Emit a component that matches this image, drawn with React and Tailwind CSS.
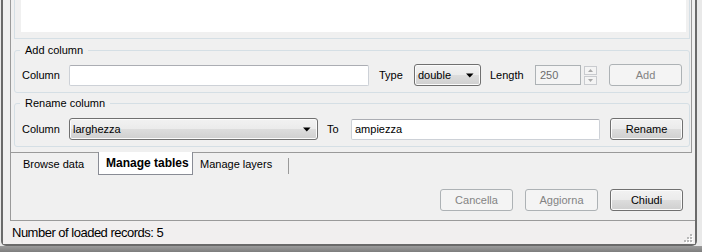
import clsx from "clsx";

const btnOn =
  "border-[#707070] bg-[linear-gradient(180deg,#f2f2f2_0%,#ebebeb_50%,#dddddd_50%,#cfcfcf_100%)] text-black shadow-[inset_0_0_0_1px_#fbfbfb]";
const btnOff = "border-[#adb2b5] bg-[#f4f4f4] text-[#838383]";

function Btn({ children, disabled, className }) {
  return (
    <div
      className={clsx(
        "flex h-[22px] w-[73px] items-center justify-center rounded-[3px] border text-[11px]",
        disabled ? btnOff : btnOn,
        className
      )}
    >
      {children}
    </div>
  );
}

function Arrow() {
  return (
    <svg width="8" height="5" viewBox="0 0 8 5" className="shrink-0">
      <polygon points="0,0.5 7.5,0.5 3.75,4.5" fill="#000" />
    </svg>
  );
}

function Combo({ value, className }) {
  return (
    <div
      className={clsx(
        "flex h-[22px] items-center justify-between rounded-[3px] border pl-[3px] pr-[6px] text-[11px]",
        btnOn,
        className
      )}
    >
      <span>{value}</span>
      <Arrow />
    </div>
  );
}

function Input({ value, className }) {
  return (
    <div
      className={clsx(
        "flex h-[21px] items-center rounded-[2px] border border-[#cdd1d7] border-t-[#abadb3] bg-white pl-[3px] text-[11px]",
        className
      )}
    >
      {value}
    </div>
  );
}

function Spin() {
  return (
    <div className="ml-[3px] flex w-[13px] flex-col gap-[1px]">
      <div className="flex h-[9px] items-center justify-center border border-[#c9cbcf] bg-[#f4f4f4]">
        <svg width="5" height="3" viewBox="0 0 5 3">
          <polygon points="0,3 5,3 2.5,0" fill="#a8a8a8" />
        </svg>
      </div>
      <div className="flex h-[9px] items-center justify-center border border-[#c9cbcf] bg-[#f4f4f4]">
        <svg width="5" height="3" viewBox="0 0 5 3">
          <polygon points="0,0 5,0 2.5,3" fill="#a8a8a8" />
        </svg>
      </div>
    </div>
  );
}

function Group({ title, className, children }) {
  return (
    <fieldset
      className={clsx(
        "ml-[3px] w-[676px] rounded-[3px] border border-[#d5dfe5] pb-[6px]",
        className
      )}
    >
      <legend className="ml-[5px] px-[5px] text-[11px] leading-[14px]">{title}</legend>
      {children}
    </fieldset>
  );
}

export default function App() {
  return (
    <div className="h-[252px] w-[702px] overflow-hidden bg-[#e9e9e9] font-['Liberation_Sans',Arial,sans-serif] text-black">
      <div className="ml-[1px] flex h-[246px] w-[696px] flex-col rounded-b-[5px] border-x-2 border-b-2 border-[#6a6a6a] bg-[#f0f0f0]">
        <div className="ml-[7px] flex h-[221px] flex-col border-b border-l border-[#9a9a9a]">
          <div className="flex w-[681px] flex-col border-b border-r border-[#9a9a9a] pb-[5px]">
            <div className="ml-[3px] h-[39px] w-[676px] border-x border-b border-[#d5dfe5]">
              <div className="ml-[6px] h-[32px] w-[665px] bg-white" />
            </div>

            <Group title="Add column" className="mt-[4px] pt-[7px]">
              <div className="flex h-[22px] items-center pl-[7px]">
                <span className="w-[47px] text-[11px]">Column</span>
                <Input value="" className="w-[300px]" />
                <span className="ml-[10px] w-[35px] text-[11px]">Type</span>
                <Combo value="double" className="w-[67px]" />
                <span className="ml-[9px] w-[45px] text-[11px]">Length</span>
                <div className="flex h-[20px] w-[46px] items-center border border-[#adb2b5] bg-[#f4f4f4] pl-[4px] text-[11px] text-[#6d6d6d]">
                  250
                </div>
                <Spin />
                <Btn disabled className="ml-[12px]">
                  Add
                </Btn>
              </div>
            </Group>

            <Group title="Rename column" className="mt-[3px] pt-[8px]">
              <div className="flex h-[22px] items-center pl-[7px]">
                <span className="w-[47px] text-[11px]">Column</span>
                <Combo value="larghezza" className="w-[249px]" />
                <span className="ml-[9px] w-[24px] text-[11px]">To</span>
                <Input value="ampiezza" className="w-[249px]" />
                <Btn className="ml-[10px] w-[72px]">Rename</Btn>
              </div>
            </Group>
          </div>

          <div className="flex h-[22px] items-stretch text-[11px]">
            <div className="flex w-[87px] items-center pl-[12px]">Browse data</div>
            <div className="-mt-[1px] flex h-[23px] w-[95px] items-center border-x border-b border-[#898c95] bg-white pl-[7px] text-[12px] font-bold">
              Manage tables
            </div>
            <div className="flex w-[96px] items-center justify-between pl-[7px]">
              <span>Manage layers</span>
              <div className="mt-[5px] h-[16px] self-start border-r border-[#9a9a9a]" />
            </div>
          </div>

          <div className="mt-[14px] flex justify-end gap-[12px] pr-[12px]">
            <Btn disabled>Cancella</Btn>
            <Btn disabled>Aggiorna</Btn>
            <Btn>Chiudi</Btn>
          </div>
        </div>

        <div className="flex h-[23px] items-center justify-between bg-[#f1efef] pl-[9px] pr-[2px]">
          <span className="text-[13px] tracking-[-0.5px]">Number of loaded records: 5</span>
          <svg width="11" height="11" viewBox="0 0 11 11" className="self-end mb-[1px]">
            {[
              [8, 2],
              [5, 5],
              [8, 5],
              [2, 8],
              [5, 8],
              [8, 8],
            ].map(([x, y]) => (
              <g key={`${x}-${y}`}>
                <rect x={x + 1} y={y + 1} width="2" height="2" fill="#ffffff" />
                <rect x={x} y={y} width="2" height="2" fill="#b8b8b8" />
              </g>
            ))}
          </svg>
        </div>
      </div>
      <div className="h-[6px] w-full bg-[linear-gradient(180deg,#9c9c9c,#7d7d7d)]" />
    </div>
  );
}
